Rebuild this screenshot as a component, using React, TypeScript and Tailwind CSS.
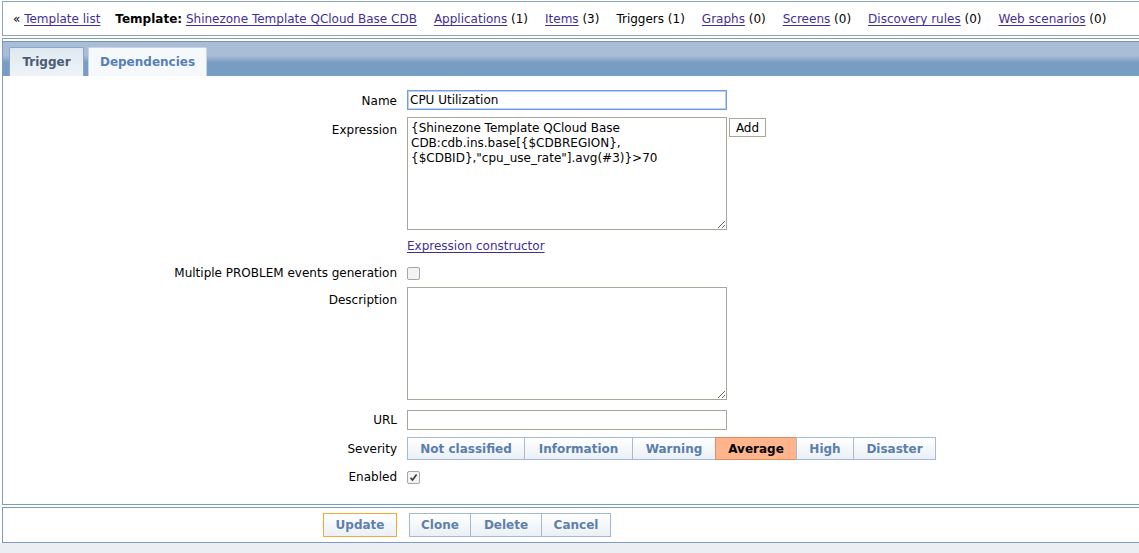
import React from "react";

const font = { fontFamily: '"DejaVu Sans", Verdana, sans-serif' };

function Link({ children }: { children: React.ReactNode }) {
  return <a className="cursor-pointer text-[#3f2f96] underline underline-offset-2">{children}</a>;
}

function Box({ checked }: { checked?: boolean }) {
  return (
    <span className="flex h-[13px] w-[13px] items-center justify-center rounded-[2px] border border-[#a6a6a6] bg-[#f3f3f3]">
      {checked && (
        <svg width="9" height="9" viewBox="0 0 9 9">
          <path d="M1.5 4.8 L3.5 7 L7.6 1.6" fill="none" stroke="#333" strokeWidth="1.6" />
        </svg>
      )}
    </span>
  );
}

const severities = [
  { label: "Not classified", w: "w-[118px]" },
  { label: "Information", w: "w-[109px]" },
  { label: "Warning", w: "w-[84px]" },
  { label: "Average", w: "w-[82px]", active: true },
  { label: "High", w: "w-[58px]" },
  { label: "Disaster", w: "w-[83px]" },
];

const btn =
  "flex h-[24px] items-center justify-center border border-[#a4b8cf] bg-gradient-to-b from-white to-[#eaf0f6] text-[12px] font-bold text-[#5f80ab]";

export default function App() {
  return (
    <div className="flex h-[553px] w-[1139px] flex-col overflow-hidden bg-white text-[12px] text-black" style={font}>
      {/* header */}
      <div className="ml-[2px] mt-[1px] flex h-[35px] w-[1150px] items-center gap-[17px] border-y border-l border-[#8ea3bb] pb-[1px] pl-[10px] pt-[2px]">
        <span>
          « <Link>Template list</Link>
        </span>
        <span className="-ml-[2px]">
          <b>Template:</b> <Link>Shinezone Template QCloud Base CDB</Link>
        </span>
        <span>
          <Link>Applications</Link> (1)
        </span>
        <span>
          <Link>Items</Link> (3)
        </span>
        <span>Triggers (1)</span>
        <span>
          <Link>Graphs</Link> (0)
        </span>
        <span>
          <Link>Screens</Link> (0)
        </span>
        <span>
          <Link>Discovery rules</Link> (0)
        </span>
        <span>
          <Link>Web scenarios</Link> (0)
        </span>
      </div>

      {/* form */}
      <div className="ml-[2px] mt-[2px] w-[1150px] border-y border-l border-[#7e9cbd] pt-[2px]">
        <div className="flex h-[35px] items-end gap-[4px] border-t border-[#7494b8] bg-gradient-to-b from-[#a9bed6] from-40% to-[#789dc4] to-60% pl-[6px]">
          <div className="flex h-[29px] w-[75px] items-center justify-center rounded-t-[2px] border border-b-0 border-[#8ba7c7] bg-gradient-to-b from-[#dfe8f2] to-[#eef3f8] pb-[1px] text-[12px] font-bold text-[#4a5b73]">
            Trigger
          </div>
          <div className="flex h-[29px] w-[119px] items-center justify-center rounded-t-[2px] border border-b-0 border-[#c6d5e5] bg-[#f6f9fc] pb-[1px] text-[12px] font-bold text-[#5680b3]">
            Dependencies
          </div>
        </div>

        <div className="grid grid-cols-[394px_1fr] gap-x-[10px] pb-[20px] pt-[14px]">
          <div className="flex h-[20px] items-center justify-end pt-[2px]">Name</div>
          <div>
            <input
              readOnly
              value="CPU Utilization"
              className="h-[20px] w-[320px] border border-[#6f9de2] px-[2px] text-[12px] outline-none shadow-[0_0_0_1px_#b9d0f3_inset]"
              style={font}
            />
          </div>

          <div className="mt-[7px] pt-[4px] text-right">Expression</div>
          <div className="mt-[7px] flex items-start gap-[2px]">
            <textarea
              readOnly
              value={'{Shinezone Template QCloud Base CDB:cdb.ins.base[{$CDBREGION},{$CDBID},"cpu_use_rate"].avg(#3)}>70'}
              className="h-[113px] w-[320px] border border-[#aaa69a] px-[3px] py-[3px] text-[12px] leading-[15px] outline-none"
              style={font}
            />
            <span className="mt-[1px] flex h-[19px] w-[37px] items-center justify-center border border-[#aaa69a] bg-white text-[12px]">
              Add
            </span>
          </div>

          <div />
          <div className="mt-[9px] h-[14px] leading-[14px]">
            <Link>Expression constructor</Link>
          </div>

          <div className="mt-[13px] flex h-[14px] items-center justify-end">Multiple PROBLEM events generation</div>
          <div className="mt-[13px] flex h-[14px] items-center">
            <Box />
          </div>

          <div className="mt-[7px] pt-[4px] text-right">Description</div>
          <div className="mt-[7px]">
            <textarea readOnly value="" className="block h-[113px] w-[320px] border border-[#aaa69a] outline-none" />
          </div>

          <div className="mt-[10px] flex h-[20px] items-center justify-end">URL</div>
          <div className="mt-[10px]">
            <input readOnly value="" className="block h-[20px] w-[320px] border border-[#aaa69a] outline-none" />
          </div>

          <div className="mt-[7px] flex h-[23px] items-center justify-end">Severity</div>
          <div className="mt-[7px] flex">
            {severities.map((s) => (
              <span
                key={s.label}
                className={`${s.w} -ml-px flex h-[23px] items-center justify-center border text-[12px] font-bold first:ml-0 ${
                  s.active
                    ? "border-[#dc8f5f] bg-[#ffb48b] text-black"
                    : "border-[#a6bad1] bg-gradient-to-b from-white to-[#eaf0f6] text-[#5a7eab]"
                }`}
              >
                {s.label}
              </span>
            ))}
          </div>

          <div className="mt-[10px] flex h-[14px] items-center justify-end">Enabled</div>
          <div className="mt-[10px] flex h-[14px] items-center">
            <Box checked />
          </div>
        </div>
      </div>

      {/* footer */}
      <div className="ml-[2px] mt-[2px] grid h-[36px] w-[1150px] grid-cols-[394px_1fr] items-center gap-x-[12px] border-y border-l border-[#7e9cbd]">
        <div className="flex justify-end">
          <span className={`${btn} w-[74px] border-[#f5a938]`}>Update</span>
        </div>
        <div className="flex">
          <span className={`${btn} w-[62px]`}>Clone</span>
          <span className={`${btn} -ml-px w-[72px]`}>Delete</span>
          <span className={`${btn} -ml-px w-[70px]`}>Cancel</span>
        </div>
      </div>

      <div className="flex-1 bg-[#ebeef2]" />
    </div>
  );
}
